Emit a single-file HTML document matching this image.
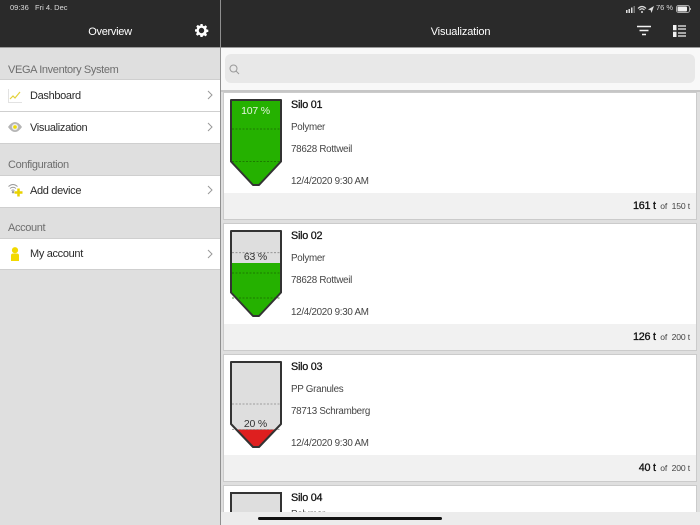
<!DOCTYPE html>
<html>
<head>
<meta charset="utf-8">
<style>
html,body{margin:0;padding:0;width:700px;height:525px;overflow:hidden}
body{position:relative;background:#dfdfdf;font-family:"Liberation Sans",sans-serif;color:#222}
#root{position:absolute;left:0;top:0;width:700px;height:525px;overflow:hidden;background:#dfdfdf}
.a{position:absolute;white-space:nowrap}
.row{position:absolute;left:0;width:220px;background:#fff;border-top:1px solid #cfcfcf;border-bottom:1px solid #cfcfcf;box-sizing:border-box}
.lbl{position:absolute;left:8px;font-size:11px;letter-spacing:-.36px;color:#6e6e6e;white-space:nowrap;line-height:13px}
.rt{position:absolute;left:30px;font-size:11px;letter-spacing:-.33px;color:#2a2a2a;white-space:nowrap;line-height:14px}
.card{position:absolute;left:224px;width:472px;height:126px;background:#fff;box-shadow:0 0 0 1px #cbcbcb}
.foot{position:absolute;left:0;right:0;bottom:0;height:26px;background:#f1f1f1}
.t{position:absolute;left:67px;font-size:9.8px;letter-spacing:-.27px;color:#444;white-space:nowrap;line-height:12px}
.n{position:absolute;left:67px;top:6px;font-size:10.8px;letter-spacing:-.25px;color:#111;white-space:nowrap;line-height:13px;-webkit-text-stroke:.25px #111}
.v{position:absolute;right:6px;top:107px;font-size:8.6px;letter-spacing:-.15px;color:#444;white-space:nowrap;line-height:13px}
.v b{font-size:10.8px;letter-spacing:-.25px;font-weight:normal;color:#111;-webkit-text-stroke:.3px #111}
svg{position:absolute;overflow:visible}
</style>
</head>
<body>
<div id="root">
<div class="a" style="left:0;top:0;width:700px;height:47px;background:#2a2a2a"></div>
<div class="a" style="left:0;top:47px;width:700px;height:1px;background:#9a9a9a"></div>
<div class="a" style="left:10px;top:3px;font-size:7.5px;color:#ddd;line-height:10px">09:36&nbsp;&nbsp; Fri 4. Dec</div>
<div class="a" style="left:0;top:25px;width:220px;text-align:center;font-size:11px;letter-spacing:-.3px;color:#fff;line-height:14px">Overview</div>
<svg style="left:195px;top:24px" width="13" height="13" viewBox="0 0 24 24"><path fill="#fff" fill-rule="evenodd" d="M10 0h4l.6 3.200 2.200.9L19.500 2.300l2.800 2.800-1.800 2.700.9 2.200 3.200.6v4l-3.200.6-.9 2.200 1.800 2.700-2.800 2.800-2.700-1.800-2.200.9L14 24h-4l-.6-3.200-2.200-.9-2.700 1.800-2.800-2.800 1.800-2.700-.9-2.200L0 14v-4l3.200-.6.9-2.200L2.300 4.500 5.100 1.700l2.700 1.800 2.200-.9zM12 7a5 5 0 1 0 0 10 5 5 0 0 0 0-10z"/></svg>

<div class="lbl" style="top:64px">VEGA Inventory System</div>
<div class="row" style="top:79px;height:33px"></div>
<div class="row" style="top:111px;height:33px"></div>
<div class="rt" style="top:89px">Dashboard</div>
<div class="rt" style="top:121px">Visualization</div>
<div class="lbl" style="top:159px">Configuration</div>
<div class="row" style="top:175px;height:33px"></div>
<div class="rt" style="top:184px">Add device</div>
<div class="lbl" style="top:222px">Account</div>
<div class="row" style="top:238px;height:32px"></div>
<div class="rt" style="top:247px">My account</div>

<svg style="left:207px;top:90px" width="6" height="10"><path d="M1 1l4 4-4 4" fill="none" stroke="#999" stroke-width="1"/></svg>
<svg style="left:207px;top:122px" width="6" height="10"><path d="M1 1l4 4-4 4" fill="none" stroke="#999" stroke-width="1"/></svg>
<svg style="left:207px;top:185px" width="6" height="10"><path d="M1 1l4 4-4 4" fill="none" stroke="#999" stroke-width="1"/></svg>
<svg style="left:207px;top:249px" width="6" height="10"><path d="M1 1l4 4-4 4" fill="none" stroke="#999" stroke-width="1"/></svg>

<svg style="left:8px;top:89px" width="14" height="14"><path d="M.5 0v13.500H14" fill="none" stroke="#e2e2e2"/><path d="M2 10l3-3 2 2 5-6" fill="none" stroke="#e3d23a" stroke-width="1.200"/></svg>
<svg style="left:8px;top:122px" width="14" height="10"><path d="M0 5Q7-5 14 5 7 15 0 5z" fill="#b5b5b5"/><circle cx="7" cy="5" r="3.200" fill="#ebebeb"/><circle cx="7" cy="5" r="1.800" fill="#f0dc00"/></svg>
<svg style="left:8px;top:183px" width="15" height="15"><path d="M.5 3.500Q5-.5 9.500 3.500M2 5.500Q5 3 8 5.500M3.500 7.500Q5 6.500 6.500 7.500" fill="none" stroke="#999" stroke-width="1"/><circle cx="5" cy="9.200" r="1.200" fill="#999"/><path d="M6.500 9.500h8M10.500 5.500v8" stroke="#e9d200" stroke-width="2.500"/></svg>
<svg style="left:11px;top:247px" width="8" height="14"><circle cx="4" cy="3.200" r="3.100" fill="#f2d900"/><path d="M0 14V8.500Q0 6.500 2 6.500h4q2 0 2 2V14z" fill="#f2d900"/></svg>

<div class="a" style="left:221px;top:48px;width:479px;height:42px;background:#f8f8f8"></div>
<div class="a" style="left:221px;top:90px;width:479px;height:2px;background:#c6c6c6"></div>
<div class="a" style="left:225px;top:54px;width:470px;height:29px;border-radius:6px;background:#e8e8e8"></div>
<svg style="left:229px;top:64px" width="11" height="11"><circle cx="4.500" cy="4.500" r="3.500" fill="none" stroke="#999"/><path d="M7 7l3 3" stroke="#999"/></svg>

<div class="a" style="left:221px;top:25px;width:479px;text-align:center;font-size:11px;letter-spacing:-.15px;color:#fff;line-height:14px">Visualization</div>
<div class="a" style="left:656px;top:3px;font-size:7.5px;color:#ddd;line-height:10px">76 %</div>
<svg style="left:625px;top:5px" width="66" height="8"><path d="M1 5h1.500v3H1zM3.500 4H5v4H3.500zM6 2.500h1.500V8H6z" fill="#ddd"/><path d="M8.500 1H10v7H8.500z" fill="#777"/><path d="M13 3.500Q17-.5 21 3.500M14.500 5q2.500-2.500 5 0" fill="none" stroke="#ddd" stroke-width="1.200"/><circle cx="17" cy="7" r="1" fill="#ddd"/><path d="M23 4.500l6-3.500-2.500 7-.8-2.700z" fill="#ddd"/><rect x="51.500" y=".5" width="13" height="7" rx="2" fill="none" stroke="#aaa"/><rect x="52.500" y="1.500" width="9.500" height="5" rx="1" fill="#eee"/><rect x="65" y="3" width="1" height="2" fill="#aaa"/></svg>
<svg style="left:637px;top:25px" width="14" height="12"><path d="M0 1.500h14M2.500 5.500h9M5 9.500h4" stroke="#f2f2f2" stroke-width="1.600"/></svg>
<svg style="left:672px;top:25px" width="14" height="12"><path d="M1 0h3.500v5.200H1zM1 6.800h3.500V12H1z" fill="#f2f2f2"/><path d="M6 1h8M6 4h8M6 8h8M6 11h8" stroke="#f2f2f2" stroke-width="1.300"/></svg>

<div class="card" style="top:93px"><div class="foot"></div>
<div class="n">Silo 01</div><div class="t" style="top:29px">Polymer</div><div class="t" style="top:51px">78628 Rottweil</div><div class="t" style="top:83px">12/4/2020 9:30 AM</div>
<div class="v" style="top:107px"><b>161 t</b>&nbsp; of &nbsp;150 t</div></div>
<div class="card" style="top:224px"><div class="foot"></div>
<div class="n">Silo 02</div><div class="t" style="top:29px">Polymer</div><div class="t" style="top:51px">78628 Rottweil</div><div class="t" style="top:83px">12/4/2020 9:30 AM</div>
<div class="v"><b>126 t</b>&nbsp; of &nbsp;200 t</div></div>
<div class="card" style="top:355px"><div class="foot"></div>
<div class="n">Silo 03</div><div class="t" style="top:29px">PP Granules</div><div class="t" style="top:51px">78713 Schramberg</div><div class="t" style="top:83px">12/4/2020 9:30 AM</div>
<div class="v"><b>40 t</b>&nbsp; of &nbsp;200 t</div></div>
<div class="card" style="top:486px;height:39px"><div class="n">Silo 04</div><div class="t" style="top:23px">Polymer</div></div>

<svg style="left:0;top:0" width="700" height="525">
<path d="M231 100H281V161.500L259 185H253L231 161.500Z" fill="#25b100"/>
<path d="M232 129H280M232 161.500H280" stroke="#1a6a00" stroke-dasharray="2 1.500" stroke-width=".8"/>
<path d="M231 100H281V161.500L259 185H253L231 161.500Z" fill="none" stroke="#333" stroke-width="2" stroke-linejoin="round"/>
<path d="M231 231H281V292.500L259 316H253L231 292.500Z" fill="#dedede"/>
<path d="M231 263H281V292.500L259 316H253L231 292.500Z" fill="#25b100"/>
<path d="M232 252.700H280" stroke="#888" stroke-dasharray="2 1.500" stroke-width=".8"/>
<path d="M232 273H280M232 298H280" stroke="#1a6a00" stroke-dasharray="2 1.500" stroke-width=".8"/>
<path d="M231 231H281V292.500L259 316H253L231 292.500Z" fill="none" stroke="#333" stroke-width="2" stroke-linejoin="round"/>
<path d="M231 362H281V424L259 447H253L231 424Z" fill="#dedede"/>
<path d="M237 429.500H275L259 447H253Z" fill="#de1f1f"/>
<path d="M232 404H280M232 429.500H280" stroke="#888" stroke-dasharray="2 1.500" stroke-width=".8"/>
<path d="M231 362H281V424L259 447H253L231 424Z" fill="none" stroke="#333" stroke-width="2" stroke-linejoin="round"/>
<path d="M231 520V493H281V520H231Z" fill="#dedede" stroke="#333" stroke-width="2"/>
<text x="255.500" y="114" text-anchor="middle" font-size="10.500" letter-spacing="-.2" fill="#e6f5e0" font-family="Liberation Sans">107 %</text>
<text x="255.500" y="260" text-anchor="middle" font-size="10.500" letter-spacing="-.2" fill="#333" font-family="Liberation Sans">63 %</text>
<text x="255.500" y="427" text-anchor="middle" font-size="10.500" letter-spacing="-.2" fill="#333" font-family="Liberation Sans">20 %</text>
</svg>

<div class="a" style="left:220px;top:0;width:1px;height:525px;background:#8f8f8f"></div>
<div class="a" style="left:221px;top:512px;width:479px;height:13px;background:#ececec"></div>
<div class="a" style="left:258px;top:517px;width:184px;height:3px;border-radius:2px;background:#111"></div>
</div>
</body>
</html>
